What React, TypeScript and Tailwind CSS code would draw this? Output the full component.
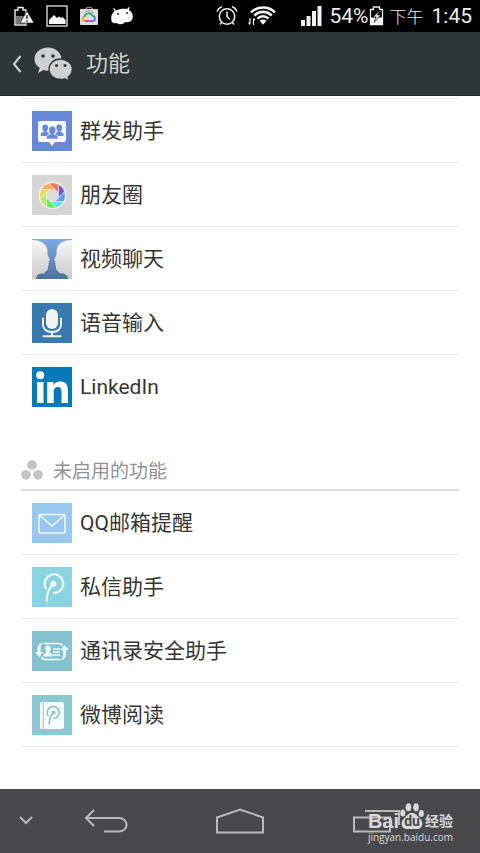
import type { ReactNode } from "react";

type Item = {
  label: string;
  icon: ReactNode;
};

function Tile({ className, children }: { className: string; children: ReactNode }) {
  return (
    <svg className={`size-10 shrink-0 ${className}`} viewBox="0 0 40 40" fill="none" aria-hidden="true">
      {children}
    </svg>
  );
}

const wheelColors = ["#6a5ae8", "#5f9bf0", "#62e3f5", "#62f05a", "#b4ee5c", "#f0dc5c", "#f5ae5a", "#f57558"];

const enabled: Item[] = [
  {
    label: "群发助手",
    icon: (
      <Tile className="bg-[#6889d8]">
        <path d="M8 10h24a2 2 0 0 1 2 2v17a2 2 0 0 1-2 2h-9l-3 4-3-4H8a2 2 0 0 1-2-2V12a2 2 0 0 1 2-2z" fill="#f7f8fb" />
        <g fill="#6889d8">
          <ellipse cx="13.2" cy="16.8" rx="2.9" ry="3.3" />
          <path d="M11.8 18h3v3l2 1v3H8.8v-2.2c0-1 1.5-1.4 3-2z" />
          <ellipse cx="27.2" cy="16.8" rx="2.9" ry="3.3" />
          <path d="M25.5 18h3v3c1.5.5 3 .9 3 2V25h-8v-3l2-1z" />
        </g>
        <g fill="#6889d8" stroke="#f7f8fb" strokeWidth=".6">
          <path d="M18.5 21H22v2.2c2 .8 4 1 4 2.6v2.1H14.500v-2.1c0-1.600 2-1.800 4-2.600z" />
          <ellipse cx="20.3" cy="19.3" rx="3.5" ry="4.2" />
        </g>
        <path d="M18.800 21h3v3h-3z" fill="#6889d8" />
      </Tile>
    ),
  },
  {
    label: "朋友圈",
    icon: (
      <Tile className="bg-[#d5d5d5]">
        <circle cx="20.5" cy="20.5" r="13.8" fill="#f4f4f2" />
        {wheelColors.map((color, i) => (
          <path
            key={color}
            d="M26.500 23V9.200A12.800 12.800 0 0 1 32.700 16.700z"
            fill={color}
            stroke="#f4f4f2"
            strokeWidth=".5"
            transform={`rotate(${i * 45} 20.5 20.5)`}
          />
        ))}
        <circle cx="20.5" cy="20.5" r="5.9" fill="#dcdbd9" />
      </Tile>
    ),
  },
  {
    label: "视频聊天",
    icon: (
      <Tile className="bg-[#6f93c8]">
        <defs>
          <linearGradient id="backdrop" x1="0" y1="0" x2="0" y2="1">
            <stop stopColor="#7fabe5" />
            <stop offset="1" stopColor="#4e7197" />
          </linearGradient>
          <linearGradient id="faces" x1="0" y1="0" x2="0" y2="40" gradientUnits="userSpaceOnUse">
            <stop stopColor="#fafafa" />
            <stop offset="1" stopColor="#c9c9c9" />
          </linearGradient>
        </defs>
        <path d="M0 0h40v40H0z" fill="url(#backdrop)" />
        <g fill="url(#faces)">
          <path d="M0 1c9 0 14 4 15.200 9 .6 2.500 0 3.500.3 5 .2 1.700 1.500 3.500 2.300 5.500.3 1-.8 1.300-1.300 1.700l.5 1.500-.7 1 .4 1.300c-.7.8-.8 1.200-.7 2.200.1 2.300-.8 3.300-2.500 4.300-.7.500-.7 1-.7 1.800C8 34.600 4.500 35 4 40H0z" />
          <path d="M40 1c-9 0-14 4-15.200 9-.6 2.500 0 3.500-.3 5-.2 1.700-1.500 3.500-2.300 5.500-.3 1 .8 1.300 1.300 1.700l-.5 1.500.7 1-.4 1.300c.7.8.8 1.200.7 2.200-.1 2.300.8 3.300 2.500 4.300.7.500.7 1 .7 1.800 4.800-.3 8.300.7 8.800 5.700h4z" />
        </g>
      </Tile>
    ),
  },
  {
    label: "语音输入",
    icon: (
      <Tile className="bg-[#3879af]">
        <rect x="14" y="6" width="12" height="20" rx="6" fill="#f3f3f3" />
        <path d="M11 15.500v6c0 4.500 3.500 7.500 9 7.500s9-3 9-7.500v-6M20 29v4M11.500 33.300h17" stroke="#f3f3f3" strokeWidth="2" strokeLinecap="round" />
      </Tile>
    ),
  },
  {
    label: "LinkedIn",
    icon: (
      <Tile className="bg-[#0679b9]">
        <g fill="#fff">
          <circle cx="8.2" cy="8.3" r="4" />
          <path d="M5 15h6.500v21H5zM15.200 15h6.200v2.900c1.200-2.100 3.500-3.400 6.700-3.400 6.300 0 7.900 4 7.900 10V36h-6.500V25.500c0-2.900-.4-5.400-3.700-5.400s-4.100 2.400-4.100 5.200V36h-6.500z" />
        </g>
      </Tile>
    ),
  },
];

const disabled: Item[] = [
  {
    label: "QQ邮箱提醒",
    icon: (
      <Tile className="bg-[#99c8ef]">
        <g stroke="#f4f8fc" strokeWidth="1.5" strokeLinejoin="round">
          <rect x="7" y="11.5" width="26" height="18.5" rx="1.5" />
          <path d="m8 12.500 12 10.500 12-10.500" />
        </g>
      </Tile>
    ),
  },
  {
    label: "私信助手",
    icon: (
      <Tile className="bg-[#8ad4e2]">
        <path d="M14 21.500A9.300 9.300 0 1 1 22 26M21 17.500c-3.500 3-6.500 8-6.200 17" stroke="#f5fbfc" strokeWidth="2" strokeLinecap="round" />
        <circle cx="21.3" cy="16.8" r="3" fill="#f5fbfc" />
      </Tile>
    ),
  },
  {
    label: "通讯录安全助手",
    icon: (
      <Tile className="bg-[#84c2d0]">
        <g stroke="#f5fafb" strokeWidth="1.5">
          <path d="M12 12.500h15c2 0 3 1 3.500 2.500M28 28.500H13c-2 0-3-1-3.500-2.500" />
          <path d="M21 18h7M21 21h7M21 24h7" strokeWidth="1.3" />
        </g>
        <g fill="#f5fafb">
          <path d="M11 11.500c-3.500.5-5.500 3-5.500 7V21H3l4.300 5 3.700-5H8.500v-3c0-2.500.5-5 2.500-6.500zM28 29.500c4-.5 6-3 6-7V19h2.700l-4.200-5-4.200 5H31v4c0 3-.5 5-3 6.500z" />
          <ellipse cx="16" cy="17.8" rx="2.7" ry="3.2" />
          <path d="M14.500 19h3v2.500c1.500.8 3 1 3 2.500v1.500h-9V24c0-1.500 1.500-1.700 3-2.500z" />
        </g>
      </Tile>
    ),
  },
  {
    label: "微博阅读",
    icon: (
      <Tile className="bg-[#8cc8d0]">
        <path d="M9.500 7H30a2 2 0 0 1 2 2v23a2 2 0 0 1-2 2H9.500a1.500 1.500 0 0 1-1.500-1.500v-24A1.500 1.500 0 0 1 9.500 7z" fill="#f8fbfb" />
        <path d="M11.300 7v27" stroke="#8cc8d0" />
        <path d="M16 20.500A6 6 0 1 1 21.500 23.500M21.500 18c-2.500 2-4.300 6-4.300 11" stroke="#8cc8d0" strokeWidth="1.7" strokeLinecap="round" />
        <circle cx="21.5" cy="17.5" r="2" fill="#8cc8d0" />
      </Tile>
    ),
  },
];

function StatusBar() {
  return (
    <div className="flex h-8 items-center justify-between bg-black pr-2 pl-3.5 text-[#ededed]">
      <div className="flex items-center gap-3">
        <svg width="20" height="22" viewBox="0 0 20 22" fill="none" aria-label="电池电量低">
          <path d="M1 5h3V2.500h5V5h3v15H1z" stroke="#eee" strokeWidth="1.4" />
          <path d="M2 11h9v8H2z" fill="#777" />
          <path d="M13 6 20 18H6z" fill="#f5f5f5" stroke="#111" strokeWidth=".6" />
          <path d="M13 10v4M13 15.200v1.500" stroke="#222" strokeWidth="1.4" />
        </svg>
        <svg width="22" height="22" viewBox="0 0 22 22" aria-label="截图">
          <rect x="1" y="1" width="20" height="20" fill="none" stroke="#bdbdbd" strokeWidth="1.6" />
          <path d="M3 19v-4l5-5 3 3 2-1.500 2 1.500 1.500-1 3 3v4z" fill="#fff" />
        </svg>
        <svg width="18" height="20" viewBox="0 0 18 20" fill="none" aria-label="云服务">
          <path d="M5 5c0-5 8-5 8 0" stroke="#999" strokeWidth="1.2" />
          <rect y="3" width="18" height="16" rx="1" fill="#ddd" />
          <path d="M5 7c0-3 8-3 8 0" stroke="#999" />
          <g strokeWidth="1.8">
            <path d="M4.500 11C5 7 11 5.500 12.500 10" stroke="#35b45b" />
            <path d="M12.500 10c3 0 3.500 4.500.5 5" stroke="#368ae8" />
            <path d="M13 15H8" stroke="#a94bd9" />
            <path d="M8 15H5" stroke="#ef3d48" />
            <path d="M5 15c-3 0-3-4-.5-4" stroke="#f5a02f" />
          </g>
        </svg>
        <svg width="24" height="18" viewBox="0 0 24 18" aria-label="安卓">
          <path d="m4 1 2 2.500C9 2 13 1.500 17 2l2-2 .8.500L18.800 3c4 2 5 7 3 10-1.500 2-4 2.500-7 2-1 2.500-6 3-8 1-4 .8-6-1.300-5.500-4C.8 9 2 6 4.700 4L3.200 1.500z" fill="#fff" />
          <circle cx="8" cy="7" r="1" fill="#222" />
          <circle cx="17" cy="6" r="1" fill="#222" />
        </svg>
      </div>
      <div className="flex items-center">
        <svg width="22" height="22" viewBox="0 0 22 22" fill="none" stroke="#eee" strokeWidth="1.5" aria-label="闹钟">
          <circle cx="11" cy="11.5" r="7.7" />
          <path d="M11 6.500v5l3 3M1 6.500c1-2.500 2.500-4 5-5M21 6.500c-1-2.500-2.500-4-5-5M5.500 17.500 4 19.500M16.500 17.500l1.500 2" />
        </svg>
        <svg className="ml-2.5" width="29" height="20" viewBox="0 0 29 20" fill="none" stroke="#f2f2f2" aria-label="无线网络">
          <path d="M3 6.500C9-.2 21-.2 27 6.500M6.300 9.600c4.700-5 12.700-5 17.400 0M9.600 12.600c3-3.200 7.800-3.200 10.800 0" strokeWidth="2.6" />
          <path d="m11.500 14.800 3.500 4 3.500-4c-2-1.800-5-1.800-7 0z" fill="#f2f2f2" stroke="none" />
          <path d="M2 12v6M5.500 13v6M.5 16.500 2 18.500M7 14l-1.500-1.500" strokeWidth="1.2" />
        </svg>
        <svg className="ml-6" width="21" height="20" viewBox="0 0 21 20" fill="#f2f2f2" aria-label="手机信号">
          <path d="M0 14h4v6H0zM5.500 10h4v10h-4zM11 5h4v15h-4zM16.500 0h4v20h-4z" />
        </svg>
        <span className="ml-2 text-[21px] leading-8">54%</span>
        <svg width="15" height="20" viewBox="0 0 15 20" aria-label="正在充电">
          <path d="M1.500 3.500h3V1h6v2.500h3v15h-12z" fill="none" stroke="#eee" strokeWidth="1.3" />
          <path d="M1 11.500h13V19H1z" fill="#fff" />
          <path d="m11 4-7 7h3l-2 5.500 7-7.500H8.500z" fill="#ddd" stroke="#111" strokeWidth=".7" />
        </svg>
        <span className="ml-1.5 font-[Noto_Sans_CJK_SC,sans-serif] text-[17px] leading-8 font-light">下午</span>
        <span className="ml-2 text-[21px] leading-8">1:45</span>
      </div>
    </div>
  );
}

function FeatureList({ items }: { items: Item[] }) {
  return (
    <ul>
      {items.map((item) => (
        <li key={item.label} className="h-16 border-b border-[#e9e9e9]">
          <button type="button" className="flex h-full w-full items-center gap-2 pl-[11px] text-left text-[21px] leading-8">
            {item.icon}
            <span>{item.label}</span>
          </button>
        </li>
      ))}
    </ul>
  );
}

function Watermark() {
  return (
    <div className="absolute right-[27px] bottom-2.5 text-[#d8d8d8]">
      <div className="flex h-7 items-end justify-between">
        <span className="font-[Liberation_Sans,sans-serif] text-[20px] leading-5 font-bold">Bai</span>
        <span className="relative flex h-7 w-6 items-end justify-center">
          <svg className="absolute top-0 left-0" width="24" height="28" viewBox="0 0 24 28" fill="#d8d8d8" aria-hidden="true">
            <ellipse cx="2.8" cy="10" rx="2.600" ry="3.600" />
            <ellipse cx="8.5" cy="4.300" rx="2.800" ry="4" />
            <ellipse cx="16" cy="4.300" rx="2.800" ry="4" />
            <ellipse cx="21.3" cy="10.500" rx="2.600" ry="3.600" />
            <path d="M12 10c4 0 5 2.500 8 5.500 4.500 4.500 2 10.500-2.500 10.500h-11C2 26-.5 20 4 15.500 7 12.500 8 10 12 10z" />
          </svg>
          <span className="relative text-[14px] leading-5 font-bold text-[#49494b]">du</span>
        </span>
        <span className="text-[14px] leading-5 font-bold">经验</span>
      </div>
      <div className="font-[Open_Sans,sans-serif] text-[10px] leading-3">jingyan.baidu.com</div>
    </div>
  );
}

export default function App() {
  return (
    <div className="flex min-h-screen flex-col bg-white font-[Roboto,Noto_Sans_CJK_SC,sans-serif] text-[#353535]">
      <StatusBar />
      <header className="flex h-16 items-center border-b border-[#222527] bg-[#303538] pl-3 text-[#d0d0d0]">
        <button type="button" aria-label="返回" className="flex items-center">
          <svg width="10" height="18" viewBox="0 0 10 18" fill="none" stroke="#cfcfcf" strokeWidth="2">
            <path d="M8.500 1 2 9l6.500 8" />
          </svg>
          <svg className="ml-3" width="40" height="34" viewBox="0 0 40 34" aria-hidden="true">
            <path d="M14 .5C6.500.5.500 5.500.500 12c0 3.800 2 7 5.300 9L4 26l5.500-3c1.500.4 3 .7 4.500.7 7.500 0 13.500-5 13.500-11.500S21.500.5 14 .5z" fill="#d0d0d0" />
            <path d="M26.500 12C20 12 15 16.500 15 22.200S20 32.500 26.500 32.500c1.500 0 3-.2 4.200-.7l4.800 2.400-1.400-4.200c2.700-2 4.200-4.500 4.200-7.800C38.300 16.500 33 12 26.500 12z" fill="#d0d0d0" stroke="#303538" strokeWidth="1.3" />
            <g fill="#303538">
              <circle cx="9" cy="9" r="1.8" />
              <circle cx="19" cy="9" r="1.8" />
              <circle cx="22.5" cy="18.5" r="1.6" />
              <circle cx="31" cy="18.5" r="1.6" />
            </g>
          </svg>
        </button>
        <h1 className="ml-3 text-[22px] leading-8">功能</h1>
      </header>

      <main className="flex-1 px-[21px] pt-0.5 pb-10">
        <section className="border-t border-[#e9e9e9] [&_li:last-child]:border-transparent">
          <FeatureList items={enabled} />
        </section>
        <section className="mt-8">
          <h2 className="flex h-10 items-center gap-2.5 border-b-2 border-[#dedede] text-[19px] leading-6 text-[#929292]">
            <svg width="22" height="20" viewBox="0 0 22 20" fill="#c5c5c5" aria-hidden="true">
              <circle cx="11" cy="5" r="4.9" />
              <circle cx="5" cy="14.8" r="4.9" />
              <circle cx="17" cy="14.8" r="4.9" />
            </svg>
            <span className="pt-1">未启用的功能</span>
          </h2>
          <FeatureList items={disabled} />
        </section>
      </main>

      <nav className="relative flex h-16 items-center bg-[#49494b]">
        <button type="button" aria-label="隐藏导航栏" className="flex w-[11%] justify-center">
          <svg width="14" height="10" viewBox="0 0 14 10" fill="none" stroke="#b7b7b7" strokeWidth="2">
            <path d="m1 1 6 6 6-6" />
          </svg>
        </button>
        <button type="button" aria-label="后退" className="flex w-[22%] justify-center">
          <svg width="44" height="24" viewBox="0 0 44 24" fill="none" stroke="#bababa" strokeWidth="2">
            <path d="M10 1 2 9l8 8M2 9h33c10 0 10 13.500 0 13.500H20" />
          </svg>
        </button>
        <button type="button" aria-label="主屏幕" className="flex w-[34%] justify-center">
          <svg width="48" height="26" viewBox="0 0 48 26" fill="none" stroke="#bababa" strokeWidth="2">
            <path d="M1 24.500V9.500L24 1.500l23 8v15z" />
          </svg>
        </button>
        <button type="button" aria-label="最近任务" className="flex w-[23%] justify-center">
          <svg width="48" height="24" viewBox="0 0 48 24" fill="none" stroke="#bababa" strokeWidth="2">
            <path d="M1 8.500h36v14H1zM12 2h34v14" />
          </svg>
        </button>
        <Watermark />
      </nav>
    </div>
  );
}
